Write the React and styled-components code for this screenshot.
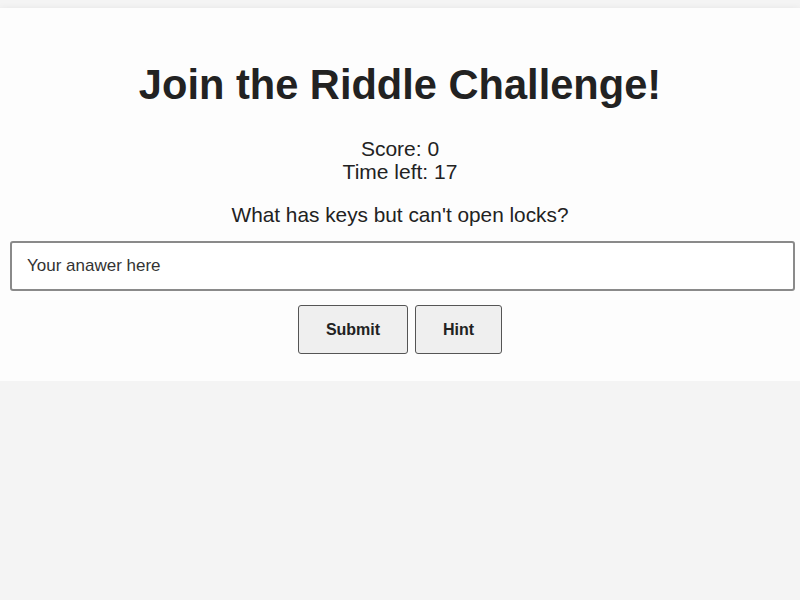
import React from "react";
import styled, { createGlobalStyle } from "styled-components";

const GlobalStyle = createGlobalStyle`
  body {
    margin: 0;
    background-color: #f4f4f4;
    font-family: "Liberation Sans", Arial, sans-serif;
  }
`;

function App() {
  return (
    <>
      <GlobalStyle />
      <Card>
        <Title>Join the Riddle Challenge!</Title>
        <Stats>
          <StatLine>Score: 0</StatLine>
          <StatLine>Time left: 17</StatLine>
        </Stats>
        <Question>What has keys but can't open locks?</Question>
        <AnswerInput placeholder="Your anawer here" />
        <ButtonRow>
          <ActionButton $width={110}>Submit</ActionButton>
          <ActionButton $width={87}>Hint</ActionButton>
        </ButtonRow>
      </Card>
    </>
  );
}

const Card = styled.div`
  margin-top: 8px;
  background-color: #fdfdfd;
  box-shadow: 0 2px 8px rgba(0, 0, 0, 0.1);
  display: flex;
  flex-direction: column;
  align-items: center;
  padding: 53px 10px 27px;
  color: #222;
`;

const Title = styled.h1`
  margin: 0;
  font-size: 41.6px;
  font-weight: 700;
  line-height: 48px;
  color: #222;
`;

const Stats = styled.div`
  margin-top: 28px;
  display: flex;
  flex-direction: column;
  align-items: center;
`;

const StatLine = styled.div`
  font-size: 21px;
  line-height: 23px;
`;

const Question = styled.p`
  margin: 20px 0 0;
  font-size: 20.8px;
  line-height: 24px;
`;

const AnswerInput = styled.input`
  margin: 14px -5px 0 0;
  align-self: stretch;
  box-sizing: border-box;
  height: 50px;
  padding: 0 15px;
  border: 2px solid #8a8a8a;
  border-radius: 3px;
  background-color: #fff;
  font-family: "Liberation Sans", Arial, sans-serif;
  font-size: 17px;
  color: #222;

  &::placeholder {
    color: #333;
  }
`;

const ButtonRow = styled.div`
  margin-top: 14px;
  display: flex;
  gap: 7px;
`;

const ActionButton = styled.button`
  width: ${(p) => p.$width}px;
  height: 49px;
  background-color: #efefef;
  border: 1px solid #555;
  border-radius: 3px;
  font-family: "Liberation Sans", Arial, sans-serif;
  font-size: 16px;
  font-weight: 700;
  color: #222;
`;

export default App;
